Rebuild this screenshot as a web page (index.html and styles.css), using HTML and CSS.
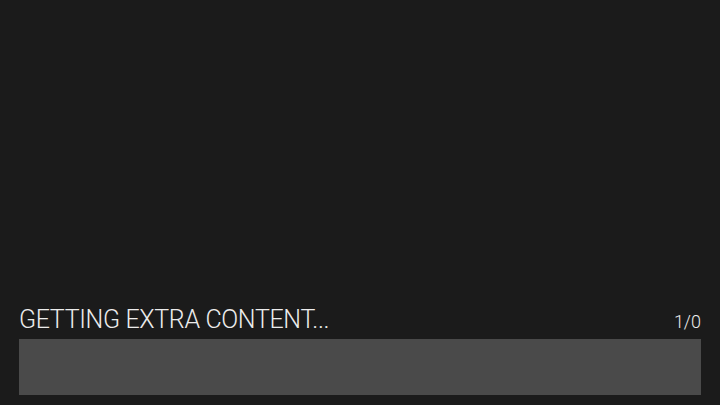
FILE: index.html
```html
<!DOCTYPE html>
<html>
<head>
<meta charset="utf-8">
<link rel="stylesheet" href="styles.css">
</head>
<body>
<div class="screen">
  <div class="status">
    <span class="title">GETTING EXTRA CONTENT...</span>
    <span class="count">1/0</span>
  </div>
  <div class="bar"></div>
</div>
</body>
</html>
```
FILE: styles.css
```css
html, body {
  margin: 0;
  padding: 0;
  background: #1b1b1b;
}
.screen {
  width: 720px;
  height: 405px;
  box-sizing: border-box;
  padding: 0 19px 10px 19px;
  display: flex;
  flex-direction: column;
  justify-content: flex-end;
}
.status {
  display: flex;
  justify-content: space-between;
  align-items: baseline;
  color: #ececec;
  font-family: Roboto, "Liberation Sans", sans-serif;
  font-weight: 300;
  margin-bottom: 5px;
}
.title {
  font-size: 25px;
  line-height: 28px;
  letter-spacing: -0.35px;
}
.count {
  font-size: 18px;
  line-height: 20px;
}
.bar {
  height: 56px;
  background: #4a4a4a;
}
```
